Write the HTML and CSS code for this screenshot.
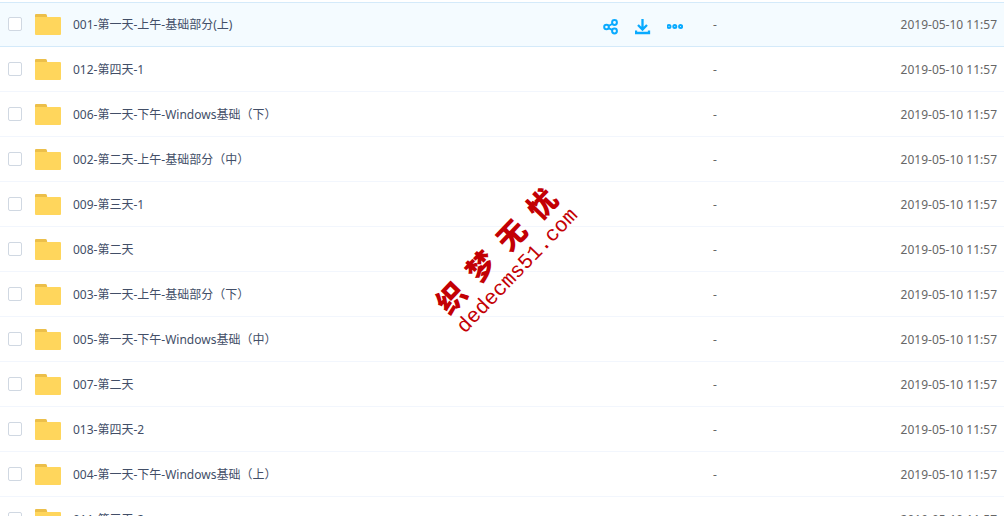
FILE: index.html
```
<!DOCTYPE html>
<html lang="zh-CN">
<head>
<meta charset="utf-8">
<meta name="viewport" content="width=device-width, initial-scale=1">
<title>文件列表</title>
<link rel="stylesheet" href="styles.css">
</head>
<body>
<svg class="sprite" aria-hidden="true">
  <symbol id="folder" viewBox="0 0 26 21">
    <path fill="#ecbf4a" d="M1 0h9.500q1 0 1.300 1l.7 3H0V1q0-1 1-1z"/>
    <path fill="#ffd65c" d="M0 3h25q1 0 1 1v16q0 1-1 1H1q-1 0-1-1z"/>
  </symbol>
</svg>
<main class="file-list">
  <table class="files">
    <colgroup><col class="col-name"><col class="col-actions"><col class="col-size"><col class="col-date"></colgroup>
    <tbody id="rows"></tbody>
  </table>
  <div class="watermark">
    <div class="watermark-name"><span>织</span><span>梦</span><span>无</span><span>忧</span></div>
    <div class="watermark-site">dedecms51.com</div>
  </div>
</main>
<template id="actions">
  <div class="actions">
    <button type="button" aria-label="分享"><svg viewBox="0 0 16 16"><circle cx="3.500" cy="8" r="2.300"/><circle cx="11.500" cy="3.500" r="2.400"/><circle cx="11.500" cy="12" r="2.400"/><path d="M5.500 7l3.600-2M5.500 9.200l3.600 1.700"/></svg></button>
    <button type="button" aria-label="下载"><svg viewBox="0 0 16 16"><path stroke-width="2.300" d="M7.500 0v10M3 6l4.500 4.500L12 6M1 11.500V14h13v-2.500"/></svg></button>
    <button type="button" aria-label="更多"><svg viewBox="0 0 16 16"><circle cx="2" cy="7.500" r="1.500"/><circle cx="7.800" cy="7.500" r="1.500"/><circle cx="13.600" cy="7.500" r="1.500"/></svg></button>
  </div>
</template>
<script src="script.js"></script>
</body>
</html>
```

FILE: styles.css
```
* { box-sizing: border-box; }

body {
  margin: 0;
  background: #fff;
  color: #424e67;
  font: 12px/20px "Noto Sans", "Noto Sans CJK SC", sans-serif;
}

.sprite { position: absolute; width: 0; height: 0; }

.file-list {
  position: relative;
  height: 100vh;
  padding-top: 2px;
  overflow: hidden;
}

.files {
  width: 100%;
  table-layout: fixed;
  border-collapse: separate;
  border-spacing: 0;
}

.col-actions { width: 110px; }
.col-size { width: 120px; }
.col-date { width: 172px; }

.files td {
  height: 45px;
  padding: 1px 0 0;
  border-bottom: 1px solid #f2f6fd;
  vertical-align: middle;
}

.files .is-active td {
  padding-top: 0;
  background: #f4fbff;
  border-top: 1px solid #d4eafa;
  border-bottom-color: #d4eafa;
}

.name {
  display: flex;
  align-items: center;
  padding-left: 8px;
  white-space: nowrap;
}

.check {
  appearance: none;
  width: 14px;
  height: 14px;
  margin: 0 13px 1px 0;
  border: 1px solid #d0d8e2;
  border-radius: 2px;
  background: #fff;
}

.check:checked { background: #09aaff; }

.folder {
  width: 26px;
  height: 21px;
  margin-right: 12px;
}

.actions {
  display: flex;
  gap: 16px;
  padding: 4px 0 0 1px;
}

.actions button {
  width: 16px;
  height: 16px;
  padding: 0;
  border: 0;
  background: none;
  cursor: pointer;
}

.actions svg {
  display: block;
  width: 16px;
  height: 16px;
  fill: none;
  stroke: #09aaff;
  stroke-width: 2;
}

.files .size {
  padding-left: 1px;
  color: #666;
}

.files .date {
  padding-right: 7px;
  color: #666;
  text-align: right;
}

.watermark {
  position: absolute;
  top: 259px;
  left: 505px;
  display: grid;
  gap: 4px;
  width: 168px;
  color: #c30004;
  transform: translate(-50%, -50%) rotate(-46deg);
  pointer-events: none;
}

.watermark-name {
  display: flex;
  justify-content: space-between;
  padding: 0 4px;
  font: 900 29px/32px "Noto Sans CJK SC", sans-serif;
}

.watermark-site {
  font: 21px/24px "Liberation Mono", monospace;
  text-align: center;
}
```

FILE: script.js
```
const files = [
  "001-第一天-上午-基础部分(上)",
  "012-第四天-1",
  "006-第一天-下午-Windows基础（下）",
  "002-第二天-上午-基础部分（中）",
  "009-第三天-1",
  "008-第二天",
  "003-第一天-上午-基础部分（下）",
  "005-第一天-下午-Windows基础（中）",
  "007-第二天",
  "013-第四天-2",
  "004-第一天-下午-Windows基础（上）",
  "011-第三天-2"
];

const rows = document.getElementById("rows");
const actions = document.getElementById("actions");

files.forEach((name, index) => {
  const row = rows.insertRow();
  row.innerHTML = `
    <td><label class="name"><input class="check" type="checkbox"><svg class="folder" aria-hidden="true"><use href="#folder"/></svg><span>${name}</span></label></td>
    <td></td>
    <td class="size">-</td>
    <td class="date">2019-05-10 11:57</td>`;
  if (index === 0) {
    row.className = "is-active";
    row.cells[1].append(actions.content.cloneNode(true));
  }
});
```
